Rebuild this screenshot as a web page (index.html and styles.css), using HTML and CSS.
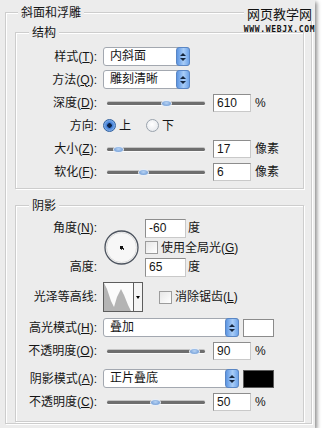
FILE: index.html
```html
<!DOCTYPE html>
<html>
<head>
<meta charset="utf-8">
<link rel="stylesheet" href="styles.css">
</head>
<body>
<div class="panel">
  <div class="watermark">
    <div class="wm-cn">网页教学网</div>
    <div class="wm-en">WWW.WEBJX.COM</div>
  </div>
  <fieldset class="group outer">
    <legend class="legend-outer">斜面和浮雕</legend>

    <fieldset class="group inner struct">
      <legend class="legend-inner">结构</legend>

      <div class="row">
        <span class="lbl">样式(<u>T</u>):</span>
        <div class="select s-short"><span class="val">内斜面</span><span class="spin"><i class="up"></i><i class="dn"></i></span></div>
      </div>
      <div class="row">
        <span class="lbl">方法(<u>Q</u>):</span>
        <div class="select s-short"><span class="val">雕刻清晰</span><span class="spin"><i class="up"></i><i class="dn"></i></span></div>
      </div>
      <div class="row">
        <span class="lbl">深度(<u>D</u>):</span>
        <div class="slider"><span class="track"></span><span class="thumb" style="left:58px"></span></div>
        <span class="field">610</span><span class="unit">%</span>
      </div>
      <div class="row">
        <span class="lbl">方向:</span>
        <span class="radio on"></span><span class="rtext">上</span>
        <span class="radio"></span><span class="rtext">下</span>
      </div>
      <div class="row">
        <span class="lbl">大小(<u>Z</u>):</span>
        <div class="slider"><span class="track"></span><span class="thumb" style="left:10px"></span></div>
        <span class="field">17</span><span class="unit">像素</span>
      </div>
      <div class="row">
        <span class="lbl">软化(<u>F</u>):</span>
        <div class="slider"><span class="track"></span><span class="thumb" style="left:35px"></span></div>
        <span class="field">6</span><span class="unit">像素</span>
      </div>
    </fieldset>

    <fieldset class="group inner shade">
      <legend class="legend-inner">阴影</legend>

      <div class="angle-grid">
        <span class="lbl g-a">角度(<u>N</u>):</span>
        <div class="dial">
          <svg width="35" height="35" viewBox="0 0 35 35">
            <circle cx="17.5" cy="17.5" r="16.5" fill="#f7f7f7" stroke="#4c535e" stroke-width="1.3"/>
            <circle cx="17.5" cy="17.5" r="15" fill="none" stroke="#dcdcdc" stroke-width="1"/>
            <rect x="16" y="16" width="3" height="3" fill="#111"/>
            <rect x="19" y="18" width="1" height="2" fill="#333"/>
            <rect x="17" y="19" width="1" height="1" fill="#555"/>
          </svg>
        </div>
        <div class="g-c1"><span class="field f-sm">-60</span><span class="unit u-deg">度</span></div>
        <div class="g-c2"><span class="check"></span><span class="ctext">使用全局光(<u>G</u>)</span></div>
        <span class="lbl g-h">高度:</span>
        <div class="g-c3"><span class="field f-sm">65</span><span class="unit u-deg">度</span></div>
      </div>

      <div class="row contour-row">
        <span class="lbl">光泽等高线:</span>
        <div class="contour">
          <svg class="curve" width="29" height="28" viewBox="0 0 29 28">
            <rect width="29" height="28" fill="#fbfbfb"/>
            <polygon points="0,0 3,6 7,18 10,24 13,14 17,6 20,12 24,22 27,28 0,28" fill="#b4b4b4"/>
          </svg>
          <span class="cdrop"><i class="dn"></i></span>
        </div>
        <span class="check c-anti"></span><span class="ctext">消除锯齿(<u>L</u>)</span>
      </div>

      <div class="row r-mode">
        <span class="lbl">高光模式(<u>H</u>):</span>
        <div class="select s-long"><span class="val">叠加</span><span class="spin"><i class="up"></i><i class="dn"></i></span></div>
        <span class="swatch sw-white"></span>
      </div>
      <div class="row r-op">
        <span class="lbl">不透明度(<u>O</u>):</span>
        <div class="slider"><span class="track"></span><span class="thumb" style="left:86px"></span></div>
        <span class="field">90</span><span class="unit">%</span>
      </div>
      <div class="row r-mode">
        <span class="lbl">阴影模式(<u>A</u>):</span>
        <div class="select s-long"><span class="val">正片叠底</span><span class="spin"><i class="up"></i><i class="dn"></i></span></div>
        <span class="swatch sw-black"></span>
      </div>
      <div class="row r-op">
        <span class="lbl">不透明度(<u>C</u>):</span>
        <div class="slider"><span class="track"></span><span class="thumb" style="left:47px"></span></div>
        <span class="field">50</span><span class="unit">%</span>
      </div>
    </fieldset>
  </fieldset>
</div>
</body>
</html>
```

FILE: styles.css
```css
* { box-sizing: border-box; }

body {
  margin: 0;
  background: #ffffff;
  font-family: "Liberation Sans", "Noto Sans CJK SC", sans-serif;
  font-size: 12px;
  line-height: 16px;
  color: #151515;
}

.panel {
  position: relative;
  width: 315px;
  height: 428px;
  padding-top: 4px;
  background: #ececec;
  box-shadow: 2px 2px 4px rgba(0, 0, 0, 0.45);
}

/* group boxes */
.group {
  min-width: 0;
  margin: 0;
  border: 1px solid #cdcdcd;
  box-shadow: inset 1px 1px 0 #ffffff, 1px 1px 0 #ffffff;
}

.outer {
  margin: 0 3px 0 5px;
  padding: 4px 7px 1px 9px;
  height: 420px;
}

.inner {
  padding: 5px 0 0 0;
}

.struct {
  height: 165px;
}

.shade {
  margin-top: 8px;
  height: 225px;
}

legend {
  padding: 0 3px;
  line-height: 16px;
  background: #ececec;
  font-family: "Noto Sans CJK SC", sans-serif;
}

.legend-outer { margin-left: 3px; }
.legend-inner { margin-left: 13px; }

/* rows */
.row {
  display: flex;
  align-items: center;
  height: 23px;
}

.lbl {
  flex: none;
  width: 87px;
  padding-right: 6px;
  text-align: right;
  white-space: nowrap;
}

u { text-decoration: underline; text-underline-offset: 1px; }

/* select */
.select {
  flex: none;
  display: flex;
  align-items: stretch;
  height: 19px;
  border: 1px solid #a3a8b0;
  border-radius: 3px;
  background: #ffffff;
}

.s-short { width: 87px; }
.s-long { width: 136px; }

.select .val {
  flex: 1;
  padding-left: 6px;
  line-height: 17px;
}

.spin {
  flex: none;
  width: 14px;
  margin: -1px -1px -1px 0;
  border: 1px solid #5a86c4;
  border-radius: 3px;
  background: linear-gradient(90deg, #5c95e2, #a9cdf7 55%, #6ea4ea);
  display: flex;
  flex-direction: column;
  align-items: center;
  justify-content: center;
  gap: 2px;
}

.up, .dn {
  display: block;
  width: 0;
  height: 0;
  border-left: 3px solid transparent;
  border-right: 3px solid transparent;
}
.up { border-bottom: 3px solid #14263f; }
.dn { border-top: 3px solid #14263f; }

/* slider */
.slider {
  flex: none;
  position: relative;
  width: 106px;
  height: 12px;
  margin-right: 4px;
}

.track {
  position: absolute;
  left: 4px;
  right: 4px;
  top: 5px;
  height: 3px;
  border-radius: 2px;
  background: #6e6e6e;
  box-shadow: 0 -1px 0 #c4c4c4, 0 1px 0 #fafafa;
}

.thumb {
  position: absolute;
  top: 3px;
  width: 11px;
  height: 7px;
  border-radius: 50%;
  background: radial-gradient(ellipse at 50% 40%, #b9d4f4, #5f8fcf);
  border: 1px solid #e9eff7;
}

/* text field */
.field {
  flex: none;
  display: block;
  width: 38px;
  height: 18px;
  padding-left: 3px;
  border: 1px solid #8d8d8d;
  border-right-color: #c9c9c9;
  border-bottom-color: #c9c9c9;
  background: #ffffff;
  line-height: 16px;
}

.f-sm { width: 41px; height: 19px; line-height: 17px; }

.unit { margin-left: 4px; }
.u-deg { margin-left: 2px; }

/* radio */
.radio {
  flex: none;
  width: 13px;
  height: 13px;
  border-radius: 50%;
  border: 1px solid #9aa3ad;
  background: radial-gradient(circle at 45% 40%, #ffffff, #e1e4e8);
}

.radio.on {
  border-color: #30609f;
  background: radial-gradient(circle, #0d2346 0 2px, #3a78d4 2.5px, #8fbbef 6px);
}

.rtext { margin: 0 15px 0 3px; }

/* angle block */
.angle-grid {
  display: grid;
  grid-template-columns: 87px 42px auto;
  grid-template-rows: 20px 19px 20px;
}

.g-a { grid-column: 1; grid-row: 1; align-self: center; }
.g-h { grid-column: 1; grid-row: 3; align-self: center; }

.dial {
  grid-column: 2;
  grid-row: 1 / 4;
  align-self: center;
  padding-left: 1px;
  height: 35px;
}
.dial svg { display: block; }

.g-c1, .g-c2, .g-c3 {
  grid-column: 3;
  display: flex;
  align-items: center;
}
.g-c1 { grid-row: 1; }
.g-c2 { grid-row: 2; }
.g-c3 { grid-row: 3; }

.check {
  flex: none;
  width: 13px;
  height: 13px;
  border: 1px solid #9c9c9c;
  background: linear-gradient(135deg, #e6e6e6, #ffffff);
}

.ctext { margin-left: 3px; }

/* contour */
.contour-row {
  height: 30px;
  margin-top: 5px;
}

.contour {
  flex: none;
  display: flex;
  width: 40px;
  height: 30px;
  border: 1px solid #5d5d5d;
  background: #ffffff;
}
.curve { display: block; }

.cdrop {
  flex: 1;
  border-left: 1px solid #5d5d5d;
  display: flex;
  align-items: center;
  justify-content: center;
  background: #f4f4f4;
}
.cdrop .dn { border-top-color: #000; border-left-width: 2px; border-right-width: 2px; }

.c-anti { margin-left: 16px; }

/* modes */
.r-mode { margin-top: 4px; }
.r-op { height: 24px; }

.swatch {
  flex: none;
  width: 31px;
  height: 18px;
  margin-left: 4px;
  border: 1px solid #8b8b8b;
}
.sw-white { background: #ffffff; }
.sw-black { background: #000000; border-color: #5a5a5a; }

/* watermark overlay */
.watermark {
  position: absolute;
  left: 242px;
  top: 6px;
  width: 75px;
  text-align: center;
  z-index: 2;
}

.wm-cn {
  display: inline-block;
  padding: 0 3px;
  background: #ececec;
  font-family: "Noto Sans CJK SC", sans-serif;
  font-size: 13px;
  line-height: 15px;
  color: #111;
}

.wm-en {
  margin-top: 2px;
  font-family: "DejaVu Sans Mono", monospace;
  font-weight: bold;
  font-size: 8px;
  line-height: 9px;
  letter-spacing: 0.7px;
  color: #111;
}
```
